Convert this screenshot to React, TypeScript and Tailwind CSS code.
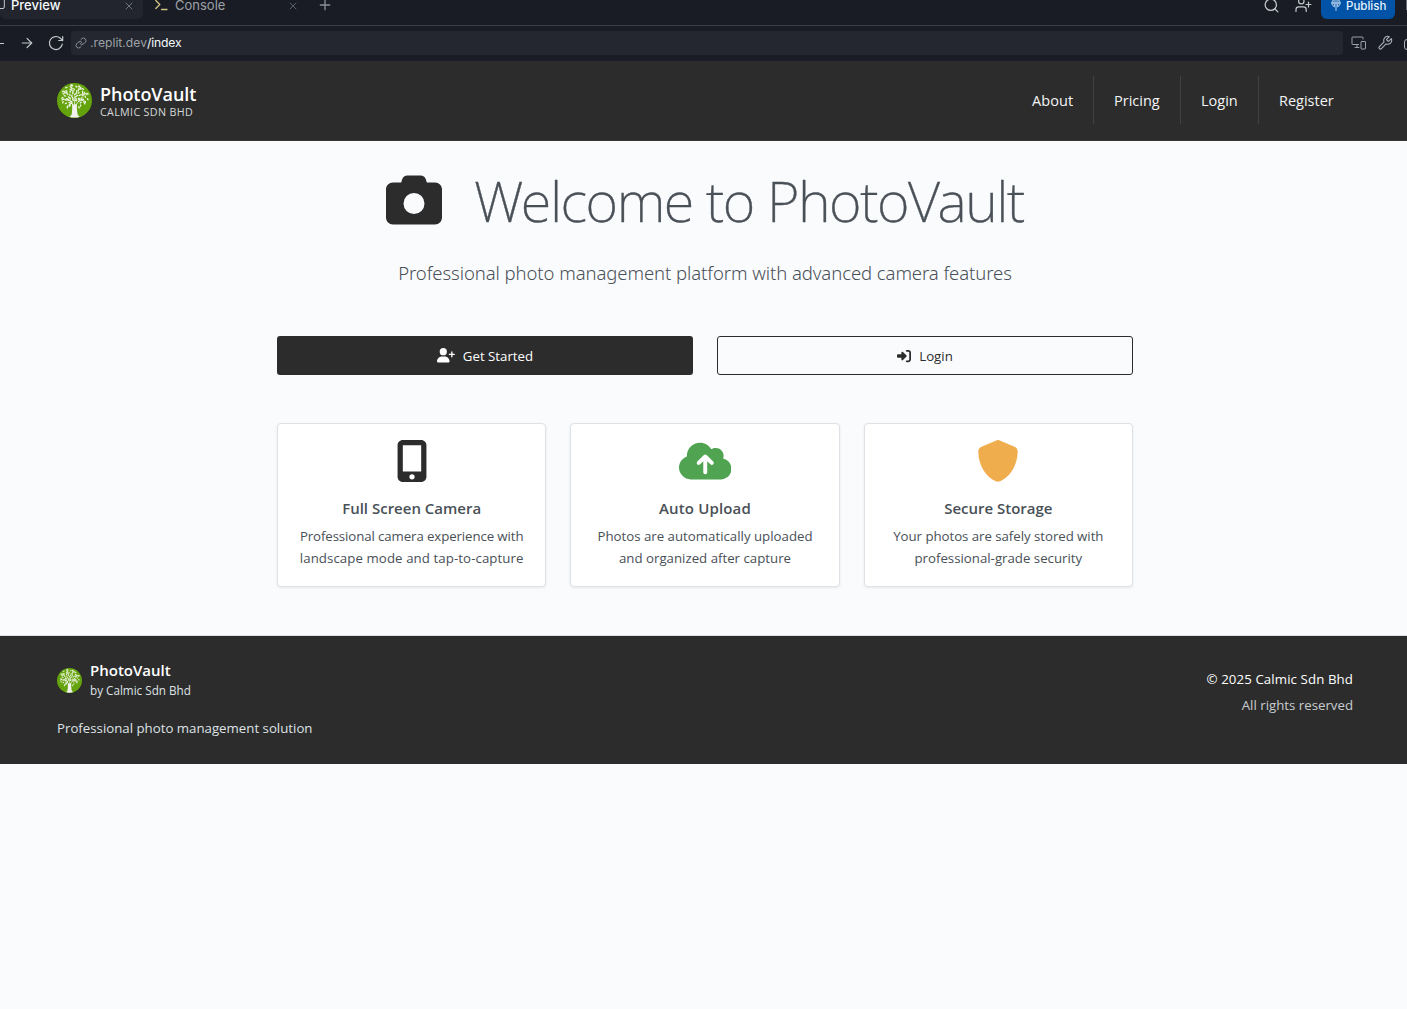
import type { ReactNode } from 'react';
import { ArrowRight, Plus, Search, X } from 'lucide-react';
import { FaCamera, FaCloudArrowUp, FaMobileScreenButton, FaRightToBracket, FaShield, FaUserPlus } from 'react-icons/fa6';

const leaves = Array.from({ length: 84 }, (_, i) => {
  const a = i * 2.39996 + Math.sin(i * 12.9) * 0.12;
  const r = Math.sqrt((i + 0.5) / 84) * 13.6 + Math.sin(i * 7.3) * 0.5;
  return { x: 17.5 + r * Math.cos(a), y: 13.8 + r * 0.88 * Math.sin(a), rot: (i * 67) % 180 };
}).filter((l) => !(l.y > 19 && Math.abs(l.x - 17.5) < 3.4));

function TreeLogo({ size }: { size: number }) {
  return (
    <svg width={size} height={size} viewBox="0 0 35 35" className="shrink-0">
      <circle cx="17.5" cy="17.5" r="17.5" fill="#65a30d" />
      {leaves.map((l, i) => (
        <ellipse key={i} cx={l.x} cy={l.y} rx="1.35" ry="0.75" fill="#eaf2dc" transform={`rotate(${l.rot} ${l.x} ${l.y})`} />
      ))}
      <g stroke="#f1f3ef" strokeLinecap="round" fill="none">
        <path d="M17.5 24 17.8 14M17 23 12.5 17M18 23l5-6.5M13.5 18 9 17M21.5 18.5l5-2" strokeWidth="0.8" />
      </g>
      <path d="M15 20.5c.8.9 1.6 1.2 2.5 1.2s1.8-.5 2.5-1.4c-.3 4 0 8.3.7 11.3.2 1 1.2 1.5 2 2.1q-5.2 1.7-10.4 0c1-.6 2-1.2 2.3-2.2.7-3 .7-7 .4-11Z" fill="#f1f2ef" />
    </svg>
  );
}

const stroke = { fill: 'none', stroke: 'currentColor', strokeLinecap: 'round', strokeLinejoin: 'round' } as const;

function TabBar() {
  return (
    <div className="flex h-[26px] items-start border-b border-[#3a3c4a]">
      <div className="flex h-[19px] w-[143px] shrink-0 items-start rounded-b-md bg-[#22252e]">
        <svg width="5" height="19" viewBox="0 0 5 19" {...stroke} className="text-[#c2c8cc]">
          <path d="M-3 8.5H3Q4.3 8.5 4.3 7V-2" />
        </svg>
        <span className="ml-[6px] w-[60px] text-[13px] font-medium leading-[11px] text-[#f5f9fc]">Preview</span>
        <X className="ml-[52px] shrink-0" size={12} strokeWidth={1.8} color="#777e8c" />
      </div>
      <svg width="14" height="14" viewBox="0 0 14 14" {...stroke} className="ml-3 shrink-0 text-[#cfc181]">
        <path d="m.8.5 4 4-4 4M6.5 9.5H12" strokeWidth="1.3" />
      </svg>
      <span className="ml-[6px] w-[112px] text-[13px] leading-[11px] text-[#9da2a6]">Console</span>
      <X className="shrink-0" size={12} strokeWidth={1.8} color="#5f6673" />
      <Plus className="-mt-[3px] ml-[18px] shrink-0" size={16} strokeWidth={2} color="#8b919d" />
      <div className="ml-auto flex h-[19px] shrink-0 items-start">
        <Search className="-mt-[3px] mr-[15px]" size={17} strokeWidth={1.8} color="#c2c8cc" />
        <svg width="17" height="14" viewBox="0 0 17 14" {...stroke} className="mr-[9px] text-[#c2c8cc]">
          <path d="M1 11.5V9.5Q1 6.8 3.7 6.8H8.5Q11.2 6.8 11.2 9.5v2M13.5 2v5M11 4.5h5" strokeWidth="1.2" />
          <circle cx="6.3" cy="1.2" r="2.7" strokeWidth="1.2" />
        </svg>
        <div className="flex h-[19px] w-[74px] items-start rounded-b-md bg-[#0053a6] pl-[10px] text-[#e8f2fc]">
          <svg width="10" height="12" viewBox="0 0 10 12" {...stroke} className="mr-[5px]">
            <path d="M3.5 7A4.2 4.2 0 1 1 6.5 7M.8 3h8.4M5-1v11.5M3.2-1Q2.3 3 3.5 6M6.8-1Q7.7 3 6.5 6" strokeWidth=".8" />
          </svg>
          <span className="text-[11.5px] font-medium leading-[12px]">Publish</span>
        </div>
        <div className="ml-[11px] h-[10px] w-px bg-[#696e79]" />
      </div>
    </div>
  );
}

function AddressBar() {
  return (
    <div className="flex h-[34px] items-center overflow-hidden">
      <div className="h-px w-1 shrink-0 bg-[#c2c8cc]" />
      <ArrowRight className="ml-[15px] shrink-0" size={16} strokeWidth={1.8} color="#c2c8cc" />
      <svg width="16" height="16" viewBox="0 0 16 16" {...stroke} className="ml-[13px] shrink-0 text-[#c2c8cc]">
        <path d="M14.3 9.2A6.5 6.5 0 1 1 12.4 3.3L14.7 5.5M14.7 1.5v4h-4" strokeWidth="1.2" />
      </svg>
      <div className="ml-[7px] flex h-6 w-[1272px] shrink-0 items-center rounded bg-[#242730] pl-1 text-[12.2px]">
        <svg width="12" height="12" viewBox="0 0 24 24" {...stroke} className="text-[#8b919d]">
          <path d="M10 13a5 5 0 0 0 7.54.54l3-3a5 5 0 0 0-7.07-7.07l-1.72 1.71M14 11a5 5 0 0 0-7.54-.54l-3 3a5 5 0 0 0 7.07 7.07l1.71-1.71" strokeWidth="2" />
        </svg>
        <span className="ml-[3px] text-[#9da2a6]">.replit.dev</span>
        <span className="tracking-[-0.2px] text-[#f5f9fc]">/index</span>
      </div>
      <svg width="16" height="14" viewBox="0 0 16 14" {...stroke} className="ml-[8px] shrink-0 text-[#9a9fa9]">
        <path d="M7.5 8.5H1.5Q1 8.5 1 8V1.5Q1 1 1.5 1h10Q12 1 12 1.5V3M4 11.5h4M6 8.5v3M10.5 5.5h3.5q.5 0 .5.5v6.500q0 .5-.5.5h-3.5q-.5 0-.5-.5V6q0-.5.5-.5Z" />
      </svg>
      <svg width="16" height="16" viewBox="0 0 24 24" {...stroke} className="ml-[10px] shrink-0 text-[#aeb3bb]">
        <path d="M14.7 6.3a1 1 0 0 0 0 1.4l1.6 1.6a1 1 0 0 0 1.4 0l3.8-3.8a6 6 0 0 1-7.9 7.9l-7 7a2.12 2.12 0 0 1-3-3l7-7a6 6 0 0 1 7.9-7.9Z" strokeWidth="1.6" />
      </svg>
      <div className="ml-[11px] mt-[2px] h-[11px] w-4 shrink-0 rounded-[3px] border border-[#aeb3bb]" />
    </div>
  );
}

function NavLink({ children, className }: { children: ReactNode; className: string }) {
  return <a className={`flex h-12 items-center px-5 pt-px text-[14.5px] text-[#f3f4f5] ${className}`}><span className="whitespace-nowrap">{children}</span></a>;
}

function FeatureCard({ icon, title, lines }: { icon: ReactNode; title: ReactNode; lines: ReactNode }) {
  return (
    <div className="flex h-[164px] flex-col items-center rounded border border-[#dee2e6] bg-white pt-4 shadow-[0_1px_3px_rgba(0,0,0,0.08)]">
      <div className="flex h-[42px] items-center text-[42px]">{icon}</div>
      <h5 className="mt-4 whitespace-nowrap text-[15px] font-semibold leading-5 text-[#495057]">{title}</h5>
      <p className="mt-[7px] flex flex-col items-center whitespace-nowrap text-[13.25px] leading-[22px] text-[#495057]">{lines}</p>
    </div>
  );
}

export default function App() {
  return (
    <div className="h-[1009px] w-[1407px] overflow-hidden bg-[#fafbfd] font-['Open_Sans',sans-serif]">
      <div className="h-[61px] bg-[#1a1c25] font-['Inter',sans-serif]">
        <TabBar />
        <AddressBar />
      </div>

      <header className="flex h-20 items-start justify-between border-b border-[#343434] bg-[#2c2c2c] pl-[57px] pr-[53px]">
        <div className="flex h-[79px] items-center gap-2">
          <TreeLogo size={35} />
          <div className="flex flex-col whitespace-nowrap pt-[2px]">
            <span className="text-[18px] font-semibold leading-5 tracking-[-0.05px] text-white">PhotoVault</span>
            <span className="text-[10.7px] leading-[16px] tracking-[0.35px] text-[#d5d7d9]">CALMIC SDN BHD</span>
          </div>
        </div>
        <nav className="flex divide-x divide-[#414141] pt-[15px]">
          <NavLink className="w-[82px] tracking-[0.1px]">About</NavLink>
          <NavLink className="w-[87px]">Pricing</NavLink>
          <NavLink className="w-[78px]">Login</NavLink>
          <NavLink className="w-[95px]">Register</NavLink>
        </nav>
      </header>

      <main className="ml-[277px] h-[494px] w-[856px]">
        <h1 className="flex h-[118px] items-center justify-center text-[#495057]">
          <FaCamera className="mr-[32px] text-[56px] text-[#2c2c2c]" />
          <span className="whitespace-nowrap font-['Noto_Sans',sans-serif] text-[56px] font-extralight tracking-[-1.48px] [-webkit-text-stroke:0.4px_#495057]">Welcome to PhotoVault</span>
        </h1>
        <p className="mt-[2px] h-[75px] whitespace-nowrap text-center font-['Noto_Sans',sans-serif] text-[18.5px] font-light leading-[24px] tracking-[-0.07px] text-[#495057]">
          Professional photo management platform with advanced camera features
        </p>
        <div className="grid grid-cols-2 gap-6 text-[13.25px]">
          <button className="flex h-[39px] items-center justify-center rounded-[3px] bg-[#2c2c2c] text-white">
            <FaUserPlus className="mr-2 h-[14.5px] w-[18px]" /><span className="pt-[2px]">Get Started</span>
          </button>
          <button className="flex h-[39px] items-center justify-center rounded-[3px] border border-[#2c2c2c] text-[#2c2c2c]">
            <FaRightToBracket className="mr-2 text-[14px]" /><span className="pt-[2px]">Login</span>
          </button>
        </div>
        <div className="mt-12 grid grid-cols-3 gap-6">
          <FeatureCard icon={<FaMobileScreenButton className="text-[#2c2c2c]" />} title="Full Screen Camera"
            lines={<><span className="tracking-[-0.1px]">Professional camera experience with</span><span className="tracking-[0.08px]">landscape mode and tap-to-capture</span></>} />
          <FeatureCard icon={<FaCloudArrowUp className="h-[42px] w-[52.5px] text-[#50a351]" />} title={<span className="tracking-[0.15px]">Auto Upload</span>}
            lines={<><span>Photos are automatically uploaded</span><span>and organized after capture</span></>} />
          <FeatureCard icon={<FaShield className="text-[#f0ad4e]" />} title="Secure Storage"
            lines={<><span className="tracking-[-0.04px]">Your photos are safely stored with</span><span>professional-grade security</span></>} />
        </div>
      </main>

      <footer className="flex h-[129px] justify-between border-t border-[#dee2e6] bg-[#2c2c2c] pl-[57px] pr-[54px]">
        <div className="pt-6">
          <div className="flex h-10 items-center gap-2">
            <TreeLogo size={25} />
            <div className="flex flex-col whitespace-nowrap pb-[2px]">
              <span className="text-[15px] font-semibold leading-[22px] text-white">PhotoVault</span>
              <span className="text-[11.7px] leading-[18px] text-[#dee2e6]">by Calmic Sdn Bhd</span>
            </div>
          </div>
          <p className="mt-[17px] whitespace-nowrap text-[13.25px] leading-[22px] text-[#dee2e6]">Professional photo management solution</p>
        </div>
        <div className="pt-8 text-right text-[13.25px]">
          <p className="leading-[22px] tracking-[0.1px] text-white">© 2025 Calmic Sdn Bhd</p>
          <p className="mt-1 leading-[22px] text-[#c8ccd0]">All rights reserved</p>
        </div>
      </footer>
    </div>
  );
}
